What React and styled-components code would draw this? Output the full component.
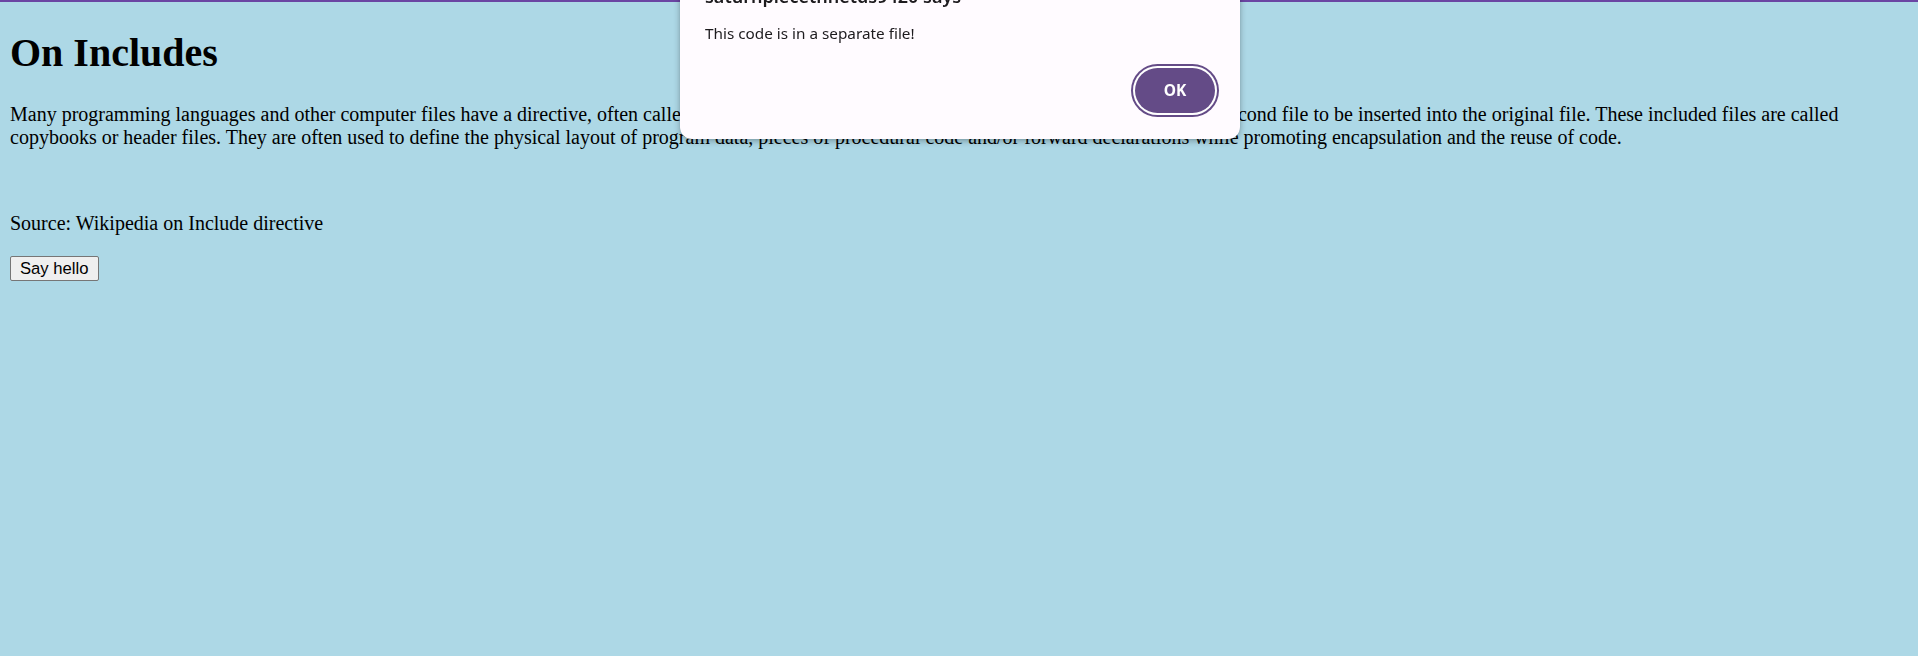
import React from "react";
import styled, { createGlobalStyle } from "styled-components";

const GlobalStyle = createGlobalStyle`
  html, body {
    margin: 0;
    padding: 0;
    background: #add8e6;
  }
  body {
    font-family: "Liberation Serif", "Times New Roman", serif;
    color: #000;
  }
`;

const Page = styled.div`
  min-height: 656px;
  background: #add8e6;
  overflow: hidden;
`;

const TopBar = styled.div`
  height: 2px;
  background: #6b45a3;
`;

const Content = styled.main`
  padding: 0 10px;
`;

const Title = styled.h1`
  margin: 27px 0 0 0;
  font-size: 40px;
  font-weight: bold;
  line-height: normal;
`;

const Text = styled.p`
  margin: ${(p) => p.$top || "20px"} 0 0 0;
  font-size: 20px;
  line-height: normal;
`;

const HelloButton = styled.button`
  margin-top: 21px;
  font-family: "Liberation Sans", Arial, sans-serif;
  font-size: 16.67px;
  line-height: normal;
  padding: 1.5px 9px;
  background: #efefef;
  border: 1px solid #767676;
  border-radius: 2px;
  color: #000;
`;

// native alert() dialog, sits over the page
const Dialog = styled.div`
  position: fixed;
  top: -40px;
  left: 680px;
  width: 560px;
  box-sizing: border-box;
  padding: 24px 25px 26px 25px;
  background: #fffbff;
  border-radius: 12px;
  box-shadow: 0 2px 6px rgba(0, 0, 0, 0.3), 0 0 1px rgba(0, 0, 0, 0.2);
  font-family: "Noto Sans", "Open Sans", sans-serif;
  color: #1d1b1e;
`;

const DialogTitle = styled.div`
  font-size: 18px;
  font-weight: 600;
  line-height: 24px;
`;

const DialogText = styled.div`
  margin-top: 15px;
  font-size: 15.3px;
  line-height: 20px;
`;

const DialogActions = styled.div`
  display: flex;
  justify-content: flex-end;
  margin-top: 24.5px;
`;

const OkButton = styled.button`
  width: 80px;
  height: 45px;
  border: none;
  border-radius: 999px;
  background: #644b87;
  color: #fff;
  font-family: "Noto Sans", "Open Sans", sans-serif;
  font-size: 15.5px;
  font-weight: bold;
  box-shadow: 0 0 0 2px #fff, 0 0 0 4px #644b87;
`;

export default function App() {
  return (
    <Page>
      <GlobalStyle />
      <TopBar />
      <Content>
        <Title>On Includes</Title>
        <Text $top="27px">
          Many programming languages and other computer files have a directive,
          often called include (sometimes copy or import), that causes the
          contents of a second file to be inserted into the original file. These
          included files are called copybooks or header files. They are often
          used to define the physical layout of program data, pieces of
          procedural code and/or forward declarations while promoting
          encapsulation and the reuse of code.
        </Text>
        <Text $top="63px">Source: Wikipedia on Include directive</Text>
        <HelloButton>Say hello</HelloButton>
      </Content>
      <Dialog>
        <DialogTitle>saturnplecethnetds9420 says</DialogTitle>
        <DialogText>This code is in a separate file!</DialogText>
        <DialogActions>
          <OkButton>OK</OkButton>
        </DialogActions>
      </Dialog>
    </Page>
  );
}
